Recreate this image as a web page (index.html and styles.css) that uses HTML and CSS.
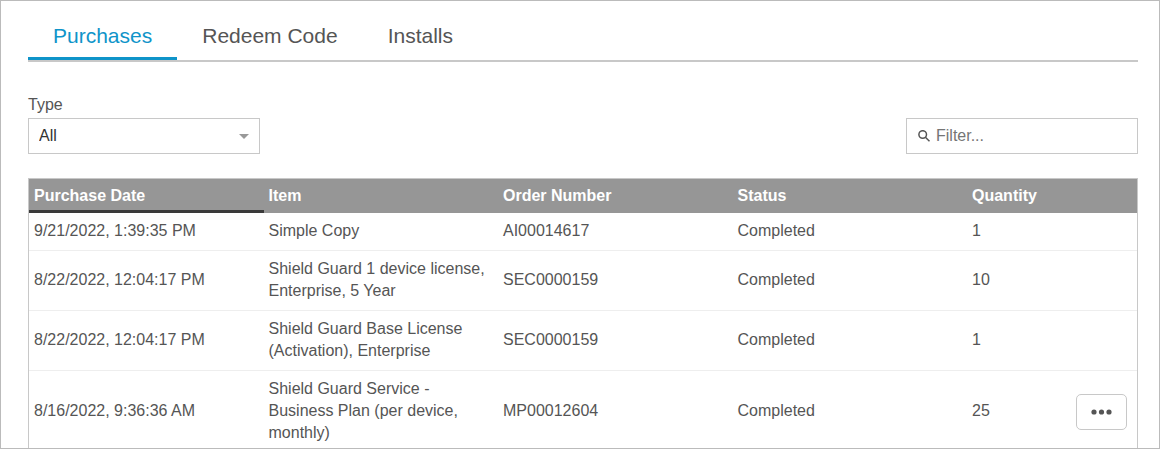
FILE: index.html
```html
<!DOCTYPE html>
<html lang="en">
<head>
    <meta charset="UTF-8">
    <meta name="viewport" content="width=device-width, initial-scale=1.0">
    <title>Purchases</title>
    <link rel="stylesheet" href="styles.css">
</head>
<body>
    <main class="panel">
        <div class="tabs" role="tablist">
            <button class="tab active" type="button" role="tab" aria-selected="true">Purchases</button>
            <button class="tab" type="button" role="tab" aria-selected="false">Redeem Code</button>
            <button class="tab" type="button" role="tab" aria-selected="false">Installs</button>
        </div>

        <div class="toolbar">
            <div class="field">
                <label for="type">Type</label>
                <div class="control">
                    <select class="select" id="type">
                        <option>All</option>
                    </select>
                    <span class="arrow"></span>
                </div>
            </div>
            <label class="control search">
                <svg class="search-icon" width="12" height="12" viewBox="0 0 12 12" aria-hidden="true">
                    <circle cx="4.7" cy="4.5" r="3.8"/>
                    <path d="M7.4 7.2L11.5 11.3"/>
                </svg>
                <input class="search-input" type="text" placeholder="Filter..." aria-label="Filter">
            </label>
        </div>

        <div class="table-box">
            <table class="purchases">
                <colgroup>
                    <col>
                    <col>
                    <col>
                    <col>
                    <col class="col-quantity">
                    <col class="col-actions">
                </colgroup>
                <thead>
                    <tr>
                        <th class="sorted">Purchase Date</th>
                        <th>Item</th>
                        <th>Order Number</th>
                        <th>Status</th>
                        <th>Quantity</th>
                        <th></th>
                    </tr>
                </thead>
                <tbody>
                    <tr>
                        <td>9/21/2022, 1:39:35 PM</td>
                        <td>Simple Copy</td>
                        <td>AI00014617</td>
                        <td>Completed</td>
                        <td>1</td>
                        <td></td>
                    </tr>
                    <tr>
                        <td>8/22/2022, 12:04:17 PM</td>
                        <td>Shield Guard 1 device license, Enterprise, 5 Year</td>
                        <td>SEC0000159</td>
                        <td>Completed</td>
                        <td>10</td>
                        <td></td>
                    </tr>
                    <tr>
                        <td>8/22/2022, 12:04:17 PM</td>
                        <td>Shield Guard Base License (Activation), Enterprise</td>
                        <td>SEC0000159</td>
                        <td>Completed</td>
                        <td>1</td>
                        <td></td>
                    </tr>
                    <tr>
                        <td>8/16/2022, 9:36:36 AM</td>
                        <td>Shield Guard Service - Business Plan (per device, monthly)</td>
                        <td>MP00012604</td>
                        <td>Completed</td>
                        <td>25</td>
                        <td class="actions">
                            <button class="more-btn" type="button" aria-label="More actions">
                                <svg width="21" height="6" viewBox="0 0 21 6" aria-hidden="true">
                                    <circle cx="3" cy="3" r="2.6"/>
                                    <circle cx="10.5" cy="3" r="2.6"/>
                                    <circle cx="18" cy="3" r="2.6"/>
                                </svg>
                            </button>
                        </td>
                    </tr>
                </tbody>
            </table>
        </div>
    </main>
</body>
</html>
```
FILE: styles.css
```css
:root {
    --primary: #0f94c9;
    --text: #555;
    --line: #c8c8c8;
    --head: #969696;
}

* {
    margin: 0;
    padding: 0;
    box-sizing: border-box;
}

body {
    font-family: "Liberation Sans", Arial, sans-serif;
    font-size: 16px;
    line-height: 22px;
    color: var(--text);
    background: #fff;
}

button,
input,
select {
    font: inherit;
    color: inherit;
    background: none;
    border: none;
}

.panel {
    height: 100vh;
    overflow: hidden;
    padding: 12px 21px 0 27px;
    border: 1px solid #bbb;
}

/* Tabs */
.tabs {
    display: flex;
    border-bottom: 2px solid var(--line);
}

.tab {
    padding: 11px 25px 10px;
    font-size: 21px;
    line-height: 23px;
    border-bottom: 3px solid transparent;
    cursor: pointer;
}

.tab.active {
    color: var(--primary);
    border-bottom-color: var(--primary);
}

/* Type and filter */
.toolbar {
    display: flex;
    justify-content: space-between;
    align-items: flex-end;
    margin: 32px 0 24px;
}

.field {
    display: flex;
    flex-direction: column;
    gap: 2px;
}

.control {
    position: relative;
    display: flex;
    align-items: center;
    width: 232px;
    height: 36px;
    border: 1px solid var(--line);
}

.select {
    appearance: none;
    width: 100%;
    height: 100%;
    padding: 0 30px 0 10px;
    color: #333;
}

.arrow {
    position: absolute;
    right: 10px;
    top: 15px;
    border: 5px solid transparent;
    border-top-color: #999;
    border-bottom: none;
    pointer-events: none;
}

.search {
    gap: 6px;
    padding: 0 11px;
}

.search-icon {
    flex: none;
    fill: none;
    stroke: #555;
    stroke-width: 1.5;
}

.search-input {
    flex: 1;
    min-width: 0;
    outline: none;
}

.search-input::placeholder {
    color: #757575;
}

/* Table */
.table-box {
    border: 1px solid var(--line);
}

.purchases {
    width: 100%;
    table-layout: fixed;
    border-collapse: separate;
    border-spacing: 0;
}

.col-quantity {
    width: 100px;
}

.col-actions {
    width: 70px;
}

th,
td {
    padding: 7px 5px 8px;
    text-align: left;
    vertical-align: middle;
    border-bottom: 1px solid #eee;
}

th {
    padding: 6px 5px 3px;
    color: #fff;
    background: var(--head);
    border-bottom: 3px solid var(--head);
}

th.sorted {
    border-bottom-color: #3a3a3a;
}

.actions {
    padding: 0 10px 0 0;
    text-align: right;
}

.more-btn {
    display: inline-flex;
    align-items: center;
    justify-content: center;
    width: 51px;
    height: 36px;
    vertical-align: middle;
    border: 1px solid var(--line);
    border-radius: 5px;
    cursor: pointer;
}

.more-btn svg {
    fill: #555;
}
```
